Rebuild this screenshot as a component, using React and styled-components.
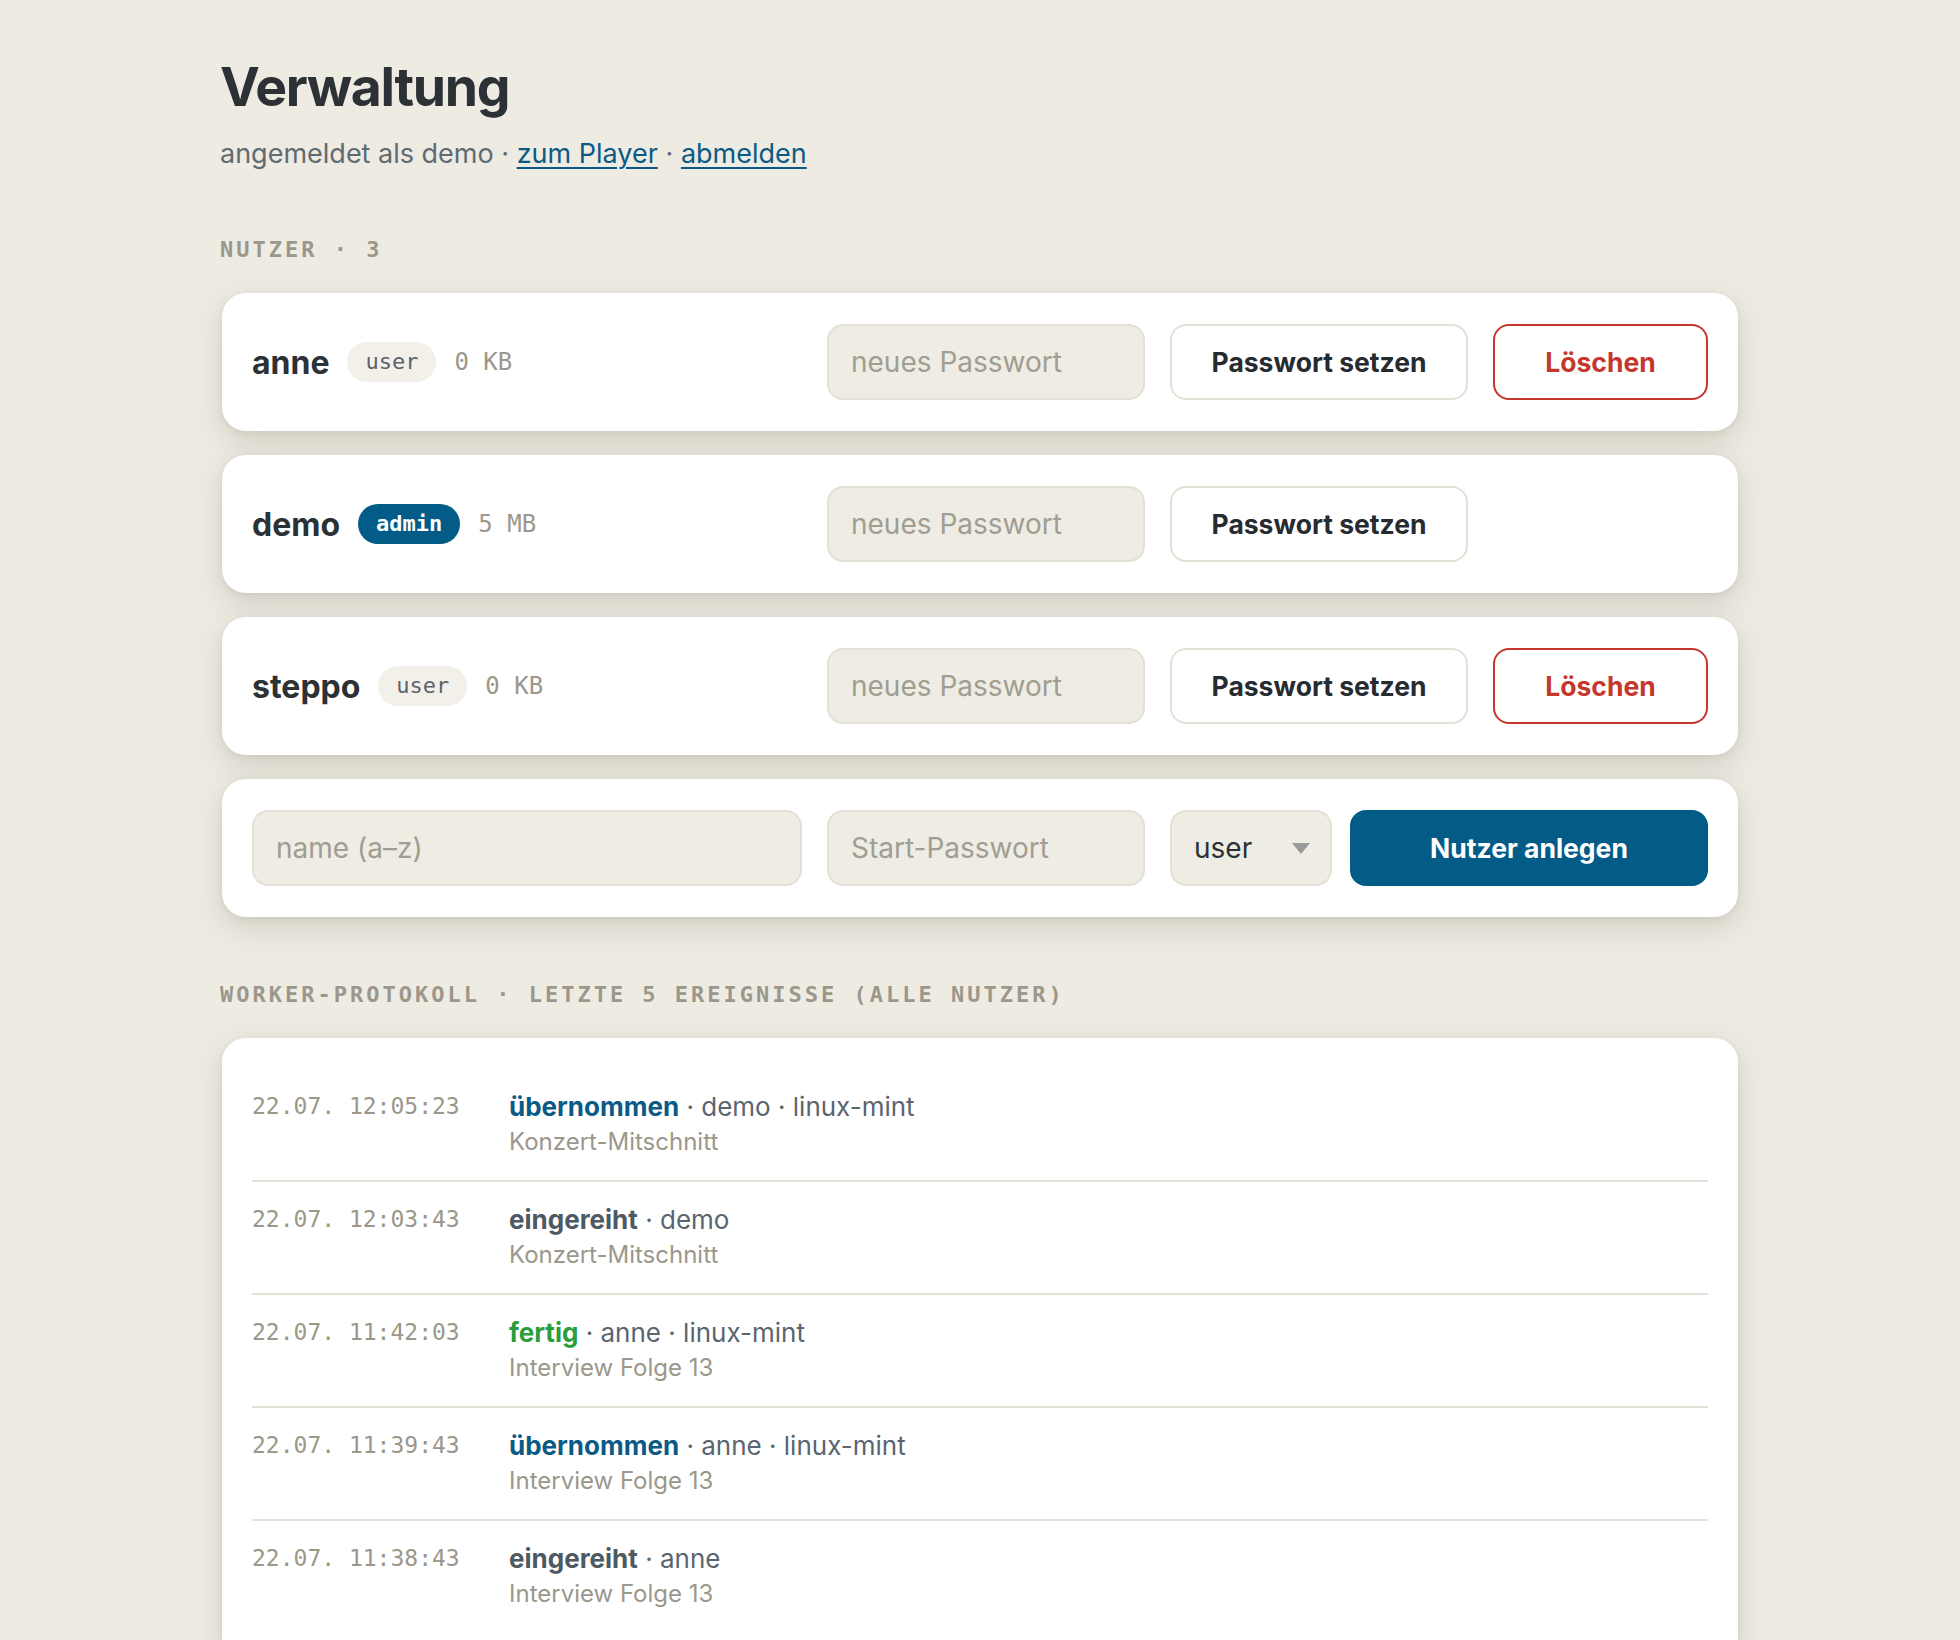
import React from "react";
import styled, { createGlobalStyle } from "styled-components";

const GlobalStyle = createGlobalStyle`
  html { scrollbar-width: none; }
  html::-webkit-scrollbar { display: none; }
  body {
    margin: 0;
    background: #eeebe3;
    font-family: Inter, "Noto Sans", "Liberation Sans", sans-serif;
    color: #2b3135;
  }
  * { box-sizing: border-box; }
`;

const mono = `"DejaVu Sans Mono", "Liberation Mono", monospace`;

const Page = styled.main`
  width: 1516px;
  margin: 0 auto;
  padding: 54px 0 80px;
`;

const Header = styled.header`
  margin: 0 -2px;
`;

const Title = styled.h1`
  margin: 0;
  font-size: 53.5px;
  line-height: 66px;
  font-weight: 700;
  letter-spacing: -0.025em;
  color: #2b3135;
`;

const Sub = styled.p`
  margin: 15px 0 0;
  font-size: 27px;
  line-height: 38px;
  color: #5f6a72;
`;

const Link = styled.a`
  color: #0b5a85;
  text-decoration: underline;
  text-underline-offset: 4px;
  text-decoration-thickness: 2px;
`;

const SectionLabel = styled.h2`
  margin: ${(p) => p.$top}px -2px 31px;
  font-family: ${mono};
  font-size: 22px;
  line-height: 24px;
  font-weight: 700;
  letter-spacing: 3px;
  color: #9b978a;
  text-transform: uppercase;
`;

const Card = styled.section`
  background: #ffffff;
  border-radius: 24px;
  box-shadow: 0 10px 30px rgba(70, 64, 36, 0.17), 0 2px 6px rgba(70, 64, 36, 0.07);
  padding: 31px 30px;
`;

const Stack = styled.div`
  display: flex;
  flex-direction: column;
  gap: 24px;
`;

const UserRow = styled.div`
  display: grid;
  grid-template-columns: 1fr 318px 298px 215px;
  column-gap: 25px;
  align-items: center;
`;

const CreateRow = styled.div`
  display: grid;
  grid-template-columns: 1fr 318px 538px;
  column-gap: 25px;
  align-items: center;
`;

const CreateActions = styled.div`
  display: flex;
  gap: 18px;
`;

const Who = styled.div`
  display: flex;
  align-items: center;
  gap: 18px;
`;

const Name = styled.span`
  font-size: 32px;
  font-weight: 700;
  color: #2b3135;
`;

const Badge = styled.span`
  font-family: ${mono};
  font-size: 22px;
  line-height: 40px;
  height: 40px;
  padding: 0 18px;
  border-radius: 20px;
  background: ${(p) => (p.$admin ? "#035b87" : "#f3f0e9")};
  color: ${(p) => (p.$admin ? "#ffffff" : "#5b646b")};
  font-weight: ${(p) => (p.$admin ? 700 : 400)};
`;

const Size = styled.span`
  font-family: ${mono};
  font-size: 24px;
  color: #9b978a;
`;

const Field = styled.input`
  width: 100%;
  height: 76px;
  border: 2px solid #e4e0d5;
  border-radius: 16px;
  background: #efece4;
  padding: 0 22px;
  font-family: inherit;
  font-size: 28px;
  color: #2b3135;
  outline: none;
  &::placeholder { color: #a09d92; }
`;

const Button = styled.button`
  height: 76px;
  width: 100%;
  border-radius: 16px;
  font-family: inherit;
  font-size: 26.5px;
  font-weight: 700;
  cursor: pointer;
  border: 2px solid ${(p) => (p.$variant === "danger" ? "#c5372c" : p.$variant === "primary" ? "#035b87" : "#e4e0d5")};
  background: ${(p) => (p.$variant === "primary" ? "#035b87" : "#ffffff")};
  color: ${(p) => (p.$variant === "danger" ? "#c5372c" : p.$variant === "primary" ? "#ffffff" : "#262b2f")};
`;

const SelectWrap = styled.div`
  position: relative;
  width: 162px;
  flex: none;
`;

const Select = styled.select`
  appearance: none;
  -webkit-appearance: none;
  width: 100%;
  height: 76px;
  border: 2px solid #e4e0d5;
  border-radius: 16px;
  background: #efece4;
  padding: 0 22px;
  font-family: inherit;
  font-size: 28px;
  color: #2b3135;
  outline: none;
`;

const Caret = styled.svg`
  position: absolute;
  right: 22px;
  top: 50%;
  margin-top: -5px;
  pointer-events: none;
`;

const PrimaryWrap = styled.div`
  flex: 1;
`;

const LogCard = styled(Card)`
  padding: 31px 30px;
`;

const LogRow = styled.div`
  display: grid;
  grid-template-columns: 257px 1fr;
  padding: 20px 0 21px;
  border-bottom: 2px solid #e4e1d8;
  &:last-child { border-bottom: none; }
`;

const Time = styled.span`
  font-family: ${mono};
  font-size: 23px;
  line-height: 35px;
  color: #9b978a;
`;

const EventLine = styled.div`
  font-size: 26px;
  line-height: 35px;
  color: #5a6570;
`;

const Kind = styled.strong`
  font-weight: 700;
  color: ${(p) => p.$color};
`;

const Job = styled.div`
  font-size: 24px;
  line-height: 35px;
  color: #9b978a;
`;

const users = [
  { name: "anne", role: "user", size: "0 KB", del: true },
  { name: "demo", role: "admin", size: "5 MB", del: false },
  { name: "steppo", role: "user", size: "0 KB", del: true },
];

const kindColors = {
  "übernommen": "#0b5a85",
  eingereiht: "#4d5963",
  fertig: "#2a9d3c",
};

const events = [
  { t: "22.07. 12:05:23", kind: "übernommen", rest: " · demo · linux-mint", job: "Konzert-Mitschnitt" },
  { t: "22.07. 12:03:43", kind: "eingereiht", rest: " · demo", job: "Konzert-Mitschnitt" },
  { t: "22.07. 11:42:03", kind: "fertig", rest: " · anne · linux-mint", job: "Interview Folge 13" },
  { t: "22.07. 11:39:43", kind: "übernommen", rest: " · anne · linux-mint", job: "Interview Folge 13" },
  { t: "22.07. 11:38:43", kind: "eingereiht", rest: " · anne", job: "Interview Folge 13" },
];

export default function App() {
  return (
    <>
      <GlobalStyle />
      <Page>
        <Header>
          <Title>Verwaltung</Title>
          <Sub>
            angemeldet als demo · <Link href="#">zum Player</Link> · <Link href="#">abmelden</Link>
          </Sub>
        </Header>

        <SectionLabel $top={65}>Nutzer · 3</SectionLabel>
        <Stack>
          {users.map((u) => (
            <Card key={u.name}>
              <UserRow>
                <Who>
                  <Name>{u.name}</Name>
                  <Badge $admin={u.role === "admin"}>{u.role}</Badge>
                  <Size>{u.size}</Size>
                </Who>
                <Field placeholder="neues Passwort" type="text" />
                <Button>Passwort setzen</Button>
                {u.del ? <Button $variant="danger">Löschen</Button> : <span />}
              </UserRow>
            </Card>
          ))}
          <Card>
            <CreateRow>
              <Field placeholder="name (a–z)" type="text" />
              <Field placeholder="Start-Passwort" type="text" />
              <CreateActions>
                <SelectWrap>
                  <Select defaultValue="user">
                    <option value="user">user</option>
                    <option value="admin">admin</option>
                  </Select>
                  <Caret width="18" height="11" viewBox="0 0 18 11">
                    <path d="M0 0 H18 L9 11 Z" fill="#9a9a98" />
                  </Caret>
                </SelectWrap>
                <PrimaryWrap>
                  <Button $variant="primary">Nutzer anlegen</Button>
                </PrimaryWrap>
              </CreateActions>
            </CreateRow>
          </Card>
        </Stack>

        <SectionLabel $top={66}>Worker-Protokoll · letzte 5 Ereignisse (alle Nutzer)</SectionLabel>
        <LogCard>
          {events.map((e) => (
            <LogRow key={e.t}>
              <Time>{e.t}</Time>
              <div>
                <EventLine>
                  <Kind $color={kindColors[e.kind]}>{e.kind}</Kind>
                  {e.rest}
                </EventLine>
                <Job>{e.job}</Job>
              </div>
            </LogRow>
          ))}
        </LogCard>
      </Page>
    </>
  );
}
